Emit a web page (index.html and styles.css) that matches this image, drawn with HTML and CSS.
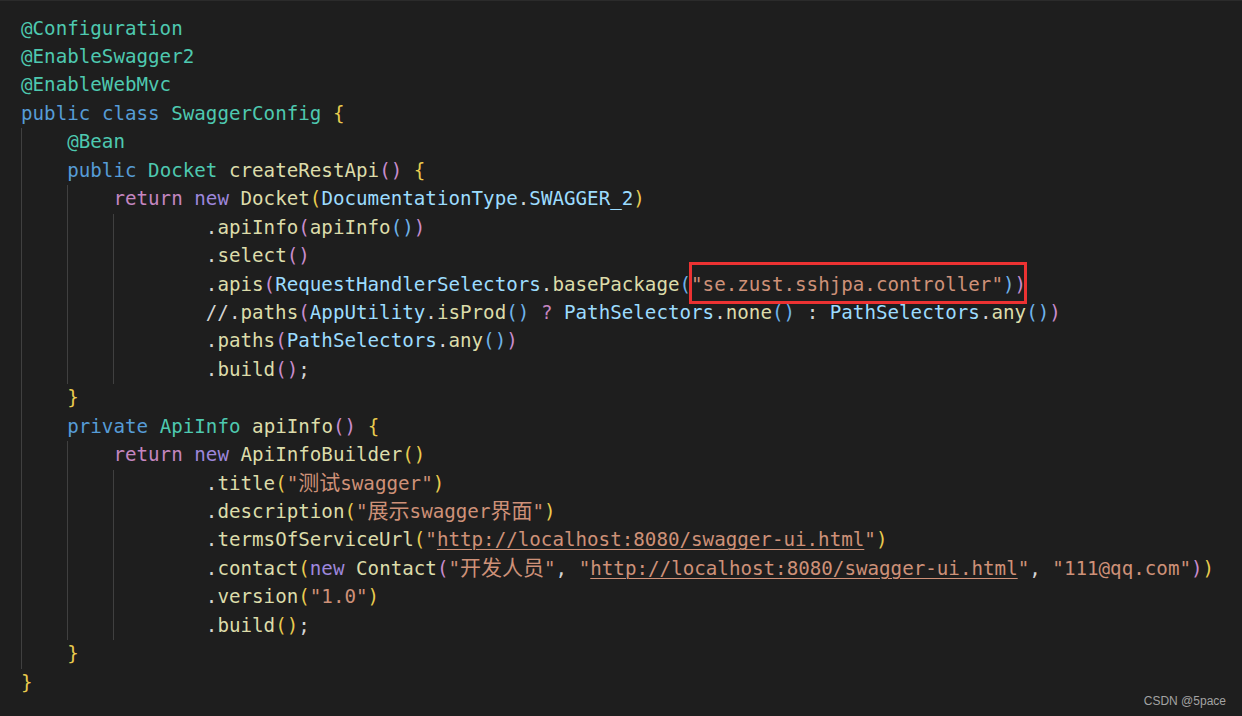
FILE: index.html
```html
<!DOCTYPE html>
<html lang="zh-CN">
<head>
	<meta charset="UTF-8">
	<title>SwaggerConfig.java</title>
	<link rel="stylesheet" href="styles.css">
</head>
<body>

<div class="editor">
	<div class="ln"><span class="c"><span class="an">@Configuration</span></span></div>
	<div class="ln"><span class="c"><span class="an">@EnableSwagger2</span></span></div>
	<div class="ln"><span class="c"><span class="an">@EnableWebMvc</span></span></div>
	<div class="ln"><span class="c"><span class="kw">public</span> <span class="kw">class</span> <span class="ty">SwaggerConfig</span> <span class="p1">{</span></span></div>
	<div class="ln"><i class="g"></i><span class="c"><span class="an">@Bean</span></span></div>
	<div class="ln"><i class="g"></i><span class="c"><span class="kw">public</span> <span class="ty">Docket</span> <span class="fn">createRestApi</span><span class="p2">()</span> <span class="p1">{</span></span></div>
	<div class="ln"><i class="g"></i><i class="g"></i><span class="c"><span class="ctl">return</span> <span class="nw">new</span> <span class="fn">Docket</span><span class="p1">(</span><span class="va">DocumentationType</span>.<span class="va">SWAGGER_2</span><span class="p1">)</span></span></div>
	<div class="ln"><i class="g"></i><i class="g"></i><i class="g"></i><i class="s"></i><span class="c">.<span class="fn">apiInfo</span><span class="p2">(</span><span class="fn">apiInfo</span><span class="p3">()</span><span class="p2">)</span></span></div>
	<div class="ln"><i class="g"></i><i class="g"></i><i class="g"></i><i class="s"></i><span class="c">.<span class="fn">select</span><span class="p2">()</span></span></div>
	<div class="ln"><i class="g"></i><i class="g"></i><i class="g"></i><i class="s"></i><span class="c">.<span class="fn">apis</span><span class="p2">(</span><span class="va">RequestHandlerSelectors</span>.<span class="fn">basePackage</span><span class="p3">(</span><span class="hl"><span class="st">"se.zust.sshjpa.controller"</span><span class="p3">)</span><span class="p2">)</span></span></span></div>
	<div class="ln"><i class="g"></i><i class="g"></i><i class="g"></i><i class="s"></i><span class="c">//.<span class="fn">paths</span><span class="p2">(</span><span class="va">AppUtility</span>.<span class="fn">isProd</span><span class="p3">()</span> <span class="ctl">?</span> <span class="va">PathSelectors</span>.<span class="fn">none</span><span class="p3">()</span> : <span class="va">PathSelectors</span>.<span class="fn">any</span><span class="p3">()</span><span class="p2">)</span></span></div>
	<div class="ln"><i class="g"></i><i class="g"></i><i class="g"></i><i class="s"></i><span class="c">.<span class="fn">paths</span><span class="p2">(</span><span class="va">PathSelectors</span>.<span class="fn">any</span><span class="p3">()</span><span class="p2">)</span></span></div>
	<div class="ln"><i class="g"></i><i class="g"></i><i class="g"></i><i class="s"></i><span class="c">.<span class="fn">build</span><span class="p2">()</span>;</span></div>
	<div class="ln"><i class="g"></i><span class="c"><span class="p1">}</span></span></div>
	<div class="ln"><i class="g"></i><span class="c"><span class="kw">private</span> <span class="ty">ApiInfo</span> <span class="fn">apiInfo</span><span class="p2">()</span> <span class="p1">{</span></span></div>
	<div class="ln"><i class="g"></i><i class="g"></i><span class="c"><span class="ctl">return</span> <span class="nw">new</span> <span class="fn">ApiInfoBuilder</span><span class="p1">()</span></span></div>
	<div class="ln"><i class="g"></i><i class="g"></i><i class="g"></i><i class="s"></i><span class="c">.<span class="fn">title</span><span class="p1">(</span><span class="st">"<span class="cjk">测试</span>swagger"</span><span class="p1">)</span></span></div>
	<div class="ln"><i class="g"></i><i class="g"></i><i class="g"></i><i class="s"></i><span class="c">.<span class="fn">description</span><span class="p1">(</span><span class="st">"<span class="cjk">展示</span>swagger<span class="cjk">界面</span>"</span><span class="p1">)</span></span></div>
	<div class="ln"><i class="g"></i><i class="g"></i><i class="g"></i><i class="s"></i><span class="c">.<span class="fn">termsOfServiceUrl</span><span class="p1">(</span><span class="st">"<u>http://localhost:8080/swagger-ui.html</u>"</span><span class="p1">)</span></span></div>
	<div class="ln"><i class="g"></i><i class="g"></i><i class="g"></i><i class="s"></i><span class="c">.<span class="fn">contact</span><span class="p1">(</span><span class="nw">new</span> <span class="fn">Contact</span><span class="p2">(</span><span class="st">"<span class="cjk">开发人员</span>"</span>, <span class="st">"<u>http://localhost:8080/swagger-ui.html</u>"</span>, <span class="st">"111@qq.com"</span><span class="p2">)</span><span class="p1">)</span></span></div>
	<div class="ln"><i class="g"></i><i class="g"></i><i class="g"></i><i class="s"></i><span class="c">.<span class="fn">version</span><span class="p1">(</span><span class="st">"1.0"</span><span class="p1">)</span></span></div>
	<div class="ln"><i class="g"></i><i class="g"></i><i class="g"></i><i class="s"></i><span class="c">.<span class="fn">build</span><span class="p1">()</span>;</span></div>
	<div class="ln"><i class="g"></i><span class="c"><span class="p1">}</span></span></div>
	<div class="ln"><span class="c"><span class="p1">}</span></span></div>
</div>

<div class="watermark">CSDN @5pace</div>

</body>
</html>
```

FILE: styles.css
```css
html, body {
	margin: 0;
	height: 100%;
	background: #1e1e1e;
	overflow: hidden;
}

.editor {
	border-top: 1px solid #2b2b2b;
	padding: 13.6px 0 0 21px;
	font-family: "DejaVu Sans Mono", "Liberation Mono", "Noto Sans CJK SC", monospace;
	font-size: 19.2px;
	color: #d4d4d4;
}

.ln {
	display: flex;
	height: 28.45px;
}

/* indent columns, 4 chars each; .g draws the guide line */
.ln i {
	display: block;
	flex: none;
	width: 4ch;
}
.ln .g { border-left: 1px solid #404040; box-sizing: border-box; }

.c {
	white-space: pre;
	line-height: 28.45px;
}

.an  { color: #4ec9b0; }
.kw  { color: #569cd6; }
.ty  { color: #4ec9b0; }
.fn  { color: #dcdcaa; }
.ctl { color: #c586c0; }
.nw  { color: #9d87dc; }
.va  { color: #9cdcfe; }
.st  { color: #ce9178; }
.p1  { color: #e9cb4e; }
.p2  { color: #c98ccd; }
.p3  { color: #6fb3ea; }

.st u {
	text-decoration-thickness: 1px;
	text-underline-offset: 3px;
}

.cjk {
	font-family: "Noto Sans CJK SC", sans-serif;
	font-size: 21px;
	line-height: 1;
}

/* red annotation box around the package string */
.hl {
	display: inline-block;
	position: relative;
}
.hl::after {
	content: "";
	position: absolute;
	left: -2px;
	right: -1px;
	top: -9px;
	bottom: -5.5px;
	border: 3px solid #ec3232;
}

.watermark {
	position: absolute;
	right: 16px;
	bottom: 8px;
	font-family: "Liberation Sans", Arial, sans-serif;
	font-size: 12px;
	color: #a3a3a3;
}
```
